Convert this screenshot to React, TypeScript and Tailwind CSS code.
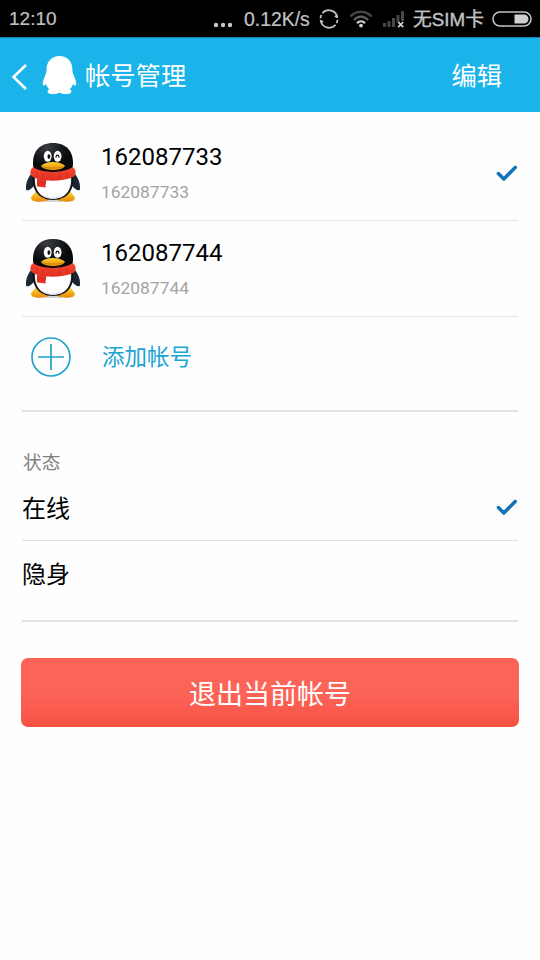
import React from 'react';

const accounts = [
  { name: '162087733', id: '162087733', active: true },
  { name: '162087744', id: '162087744', active: false },
];

const Check = () => (
  <svg className="h-[18px] w-[22px] shrink-0" viewBox="0 0 22 18" fill="none">
    <path d="M2.4 9.6 L7.8 15 L19.2 3.4" stroke="#1274b8" strokeWidth="3.5" strokeLinecap="round" strokeLinejoin="round" />
  </svg>
);

const Penguin = () => (
  <svg className="-mt-px h-[62px] w-[56px] shrink-0" viewBox="0 0 56 62">
    <defs>
      <linearGradient id="foot" x1="0" y1="0" x2="0" y2="1">
        <stop offset="0" stopColor="#ffcf2e" />
        <stop offset="1" stopColor="#e98a05" />
      </linearGradient>
      <linearGradient id="scarf" x1="0" y1="0" x2="0" y2="1">
        <stop offset="0" stopColor="#f5462f" />
        <stop offset="1" stopColor="#e03020" />
      </linearGradient>
      <radialGradient id="belly" cx="0.5" cy="0.4" r="0.62">
        <stop offset="0.8" stopColor="#ffffff" />
        <stop offset="1" stopColor="#c4c8cc" />
      </radialGradient>
      <radialGradient id="head" cx="0.35" cy="0.15" r="0.6">
        <stop offset="0" stopColor="#3a3d42" />
        <stop offset="0.6" stopColor="#17191d" />
        <stop offset="1" stopColor="#08090b" />
      </radialGradient>
    </defs>
    <ellipse cx="28" cy="59.5" rx="18" ry="1.6" fill="#d4d4d4" />
    <path d="M9 30 C3 35 0 43 1.2 49 C3.5 50.5 8 47 12 41 Z" fill="#1c2733" />
    <path d="M47 30 C53 35 56 43 54.8 49 C52.5 50.5 48 47 44 41 Z" fill="#1c2733" />
    <path d="M6.5 56 C5.5 60 10 60.6 15 60.4 C20 60.2 24 59.4 24.5 58 L12 49 C10 52 8 54 6.5 56 Z" fill="url(#foot)" />
    <path d="M49.5 56 C50.5 60 46 60.6 41 60.4 C36 60.2 32 59.4 31.5 58 L44 49 C46 52 48 54 49.5 56 Z" fill="url(#foot)" />
    <path d="M8 28 C5 47 12 59 28 59 C44 59 51 47 48 28 Z" fill="#121519" />
    <path d="M10 35 C8.5 49 16 58 28 58 C40 58 47.5 49 46 35 Z" fill="url(#belly)" />
    <path d="M10.5 51.5 C8 54 5.5 56 6.8 58.5 C8 60.6 14 60.8 19 59.8 C20.5 59.4 21 58.6 19.5 57.6 C15.5 56.3 12.5 54 10.5 51.5 Z" fill="url(#foot)" />
    <path d="M45.5 51.5 C48 54 50.5 56 49.2 58.5 C48 60.6 42 60.8 37 59.8 C35.5 59.4 35 58.6 36.5 57.6 C40.5 56.3 43.5 54 45.5 51.5 Z" fill="url(#foot)" />
    <path d="M28 2 C14 2 8 11 8 22 C8 29 10 33 28 33 C46 33 48 29 48 22 C48 11 42 2 28 2 Z" fill="url(#head)" />
    <path d="M8 26 C4.5 29 4.5 34 8 36 C20 41 36 41 48 36 C51.5 34 51.5 29 48 26 C39 32 18 33 8 26 Z" fill="url(#scarf)" />
    <path d="M12.5 36 C11.5 40 12 43 12 45.5 L20.5 46.5 C20.5 43 21.5 41 21.5 38 Z" fill="#e33524" />
    <path d="M12 31 v5 M17.5 32 v6 M26 33 v6 M34 33 v6 M42 31 v5 M13 41.5 h8" stroke="#c22a1d" strokeWidth="0.7" fill="none" />
    <ellipse cx="22.7" cy="15.3" rx="3.9" ry="5.5" fill="#fff" />
    <ellipse cx="32.6" cy="15.3" rx="3.9" ry="5.5" fill="#fff" />
    <ellipse cx="23.9" cy="15.6" rx="1.4" ry="2.3" fill="#111" />
    <path d="M31 16 C31.4 13.5 33.4 13.5 34 16" stroke="#111" strokeWidth="1.3" fill="none" strokeLinecap="round" />
    <path d="M16 25 C19 21.5 25 21 28 21 C31 21 37 21.5 40 25 C37 30.5 19 30.5 16 25 Z" fill="url(#foot)" />
    <path d="M17 25.8 C23 27.5 33 27.5 39 25.8" stroke="#a8690c" strokeWidth="0.5" fill="none" />
  </svg>
);

const StatusBar = () => (
  <div className="flex h-[37px] items-center bg-black pl-[9px] pr-[8px] pt-px font-['Liberation_Sans','Noto_Sans_CJK_SC',sans-serif] text-[#c2c2c2]">
    <span className="text-[19px] leading-[24px] [-webkit-text-stroke:0.2px_#c2c2c2]">12:10</span>
    <svg className="ml-auto mt-[11px] h-[6px] w-[20px]" viewBox="0 0 20 6" fill="#c8c8c8">
      <circle cx="3" cy="3" r="2.2" />
      <circle cx="10" cy="3" r="2.2" />
      <circle cx="17" cy="3" r="2.2" />
    </svg>
    <span className="ml-[11px] w-[66px] whitespace-nowrap text-[19.4px] leading-[24px] [-webkit-text-stroke:0.2px_#c2c2c2]">0.12K/s</span>
    <svg className="ml-[9px] h-[20px] w-[20px]" viewBox="0 0 20 20" fill="none" stroke="#c2c2c2" strokeWidth="1.7">
      <path d="M3.4 4.2 A8.6 8.6 0 0 1 18.4 8.6" />
      <path d="M16.6 15.8 A8.6 8.6 0 0 1 1.6 11.4" />
      <path d="M1.5 9.2 A8.6 8.6 0 0 1 2.4 5.8 M18.5 10.8 A8.6 8.6 0 0 1 17.6 14.2" />
      <path d="M1.2 11.4 L4.2 13 M18.8 8.6 L15.8 7" />
    </svg>
    <svg className="ml-[10px] h-[18px] w-[24px]" viewBox="0 0 24 18" fill="none" strokeWidth="2.2">
      <path d="M1.5 6.5 C7 0.3 17 0.3 22.5 6.5" stroke="#484848" />
      <path d="M4.8 10 C9 5.4 15 5.4 19.2 10" stroke="#606060" />
      <path d="M8 13.2 C10.2 10.6 13.8 10.6 16 13.2" stroke="#d0d0d0" />
      <circle cx="12" cy="15.6" r="1.9" fill="#d0d0d0" />
    </svg>
    <svg className="ml-[9px] h-[18px] w-[23px]" viewBox="0 0 23 18">
      <path d="M1 13h3v4h-3z M5.5 11h3v6h-3z M10 8h3v9h-3z M14.5 5h3v7h-3z M19 1h3v10h-3z" fill="#474747" />
      <path d="M16.2 12 L21.2 17.2 M21.2 12 L16.2 17.2" stroke="#d0d0d0" strokeWidth="1.8" />
    </svg>
    <span className="ml-[8px] w-[71px] whitespace-nowrap pt-[2px] text-[18.8px] leading-[24px] [-webkit-text-stroke:0.4px_#c2c2c2]">无SIM卡</span>
    <svg className="ml-[8px] h-[16px] w-[40px]" viewBox="0 0 40 16">
      <rect x="1" y="1" width="38" height="14" rx="7" fill="none" stroke="#c2c2c2" strokeWidth="1.6" />
      <path d="M22.5 3.5 H32 A4.5 4.5 0 0 1 32 12.5 H22.5 Z" fill="#cfcfcf" />
    </svg>
  </div>
);

const Header = () => (
  <header className="flex h-[75px] items-center border-t border-[#1684b3] bg-[#1ab3ea] pl-[11px] pr-[38px] text-[25.3px] leading-[36px] text-white">
    <svg className="mt-[3px] h-[28px] w-[17px]" viewBox="0 0 17 28" fill="none">
      <path d="M15 2 L2.5 14 L15 26" stroke="#fff" strokeWidth="2.6" />
    </svg>
    <svg className="ml-[14px] h-[40px] w-[35px]" viewBox="0 0 35 40" fill="#fff">
      <path d="M17.5 1 C9.5 1 4.6 7 4.6 14 C4.6 17 4.2 18 3.2 20.5 C1.2 25 0 29 1.4 30.5 C2.3 31 3.4 29.6 4 29 C4.6 31 5.8 33 7.4 34.3 C4.8 35 4.5 38.8 9.5 39 C13 39.2 16 38.8 17 37.8 L18 37.8 C19 38.8 22 39.2 25.5 39 C30.5 38.8 30.2 35 27.6 34.3 C29.2 33 30.4 31 31 29 C31.6 29.6 32.7 31 33.6 30.5 C35 29 33.8 25 31.8 20.5 C30.8 18 30.4 17 30.4 14 C30.4 7 25.5 1 17.5 1 Z" />
    </svg>
    <h1 className="ml-[8px] pt-[4px]">帐号管理</h1>
    <button className="ml-auto pt-[3px]">编辑</button>
  </header>
);

export default function App() {
  return (
    <div className="h-[960px] w-[540px] bg-[#fefefe] font-[Roboto,'Noto_Sans_CJK_SC',sans-serif] text-black">
      <StatusBar />
      <Header />
      <main className="px-[22px]">
        <div className="pt-[13px]">
          {accounts.map((account) => (
            <div key={account.id} className="flex h-[96px] items-center border-b border-[#e6e6e6] pl-[3px]">
              <Penguin />
              <div className="ml-[20px] grow pt-[3px]">
                <p className="text-[24px] leading-[30px]">{account.name}</p>
                <p className="mt-[6px] text-[17.4px] leading-[28px] text-[#a3a3a3]">{account.id}</p>
              </div>
              {account.active && <Check />}
            </div>
          ))}
        </div>
        <button className="flex h-[95px] w-full items-center border-b-2 border-[#e2e2e2] pb-[13px] pl-[8px] text-[22.5px] text-[#1ba5d3]">
          <svg className="h-[42px] w-[42px]" viewBox="0 0 42 42" fill="none" stroke="#20a3cd" strokeWidth="1.7">
            <circle cx="21" cy="21" r="19" />
            <path d="M8 21 H34 M21 8 V34" />
          </svg>
          <span className="ml-[30px] pt-px">添加帐号</span>
        </button>
        <h2 className="mt-[37px] pl-px text-[18.7px] leading-[28px] text-[#808080]">状态</h2>
        <div className="flex h-[64px] items-center justify-between border-b border-[#e0e0e0] text-[24px] leading-[36px]">
          <span>在线</span>
          <span className="pb-[3px]">
            <Check />
          </span>
        </div>
        <div className="flex h-[81px] items-center border-b-2 border-[#e2e2e2] pb-[12px] text-[24px] leading-[36px]">隐身</div>
      </main>
      <button className="mx-[21px] mt-[36px] flex h-[69px] w-[498px] items-center justify-center rounded-[7px] bg-linear-to-b from-[#fd6458] from-50% to-[#f65143] pt-[5px] text-[27px] text-white">
        退出当前帐号
      </button>
    </div>
  );
}
